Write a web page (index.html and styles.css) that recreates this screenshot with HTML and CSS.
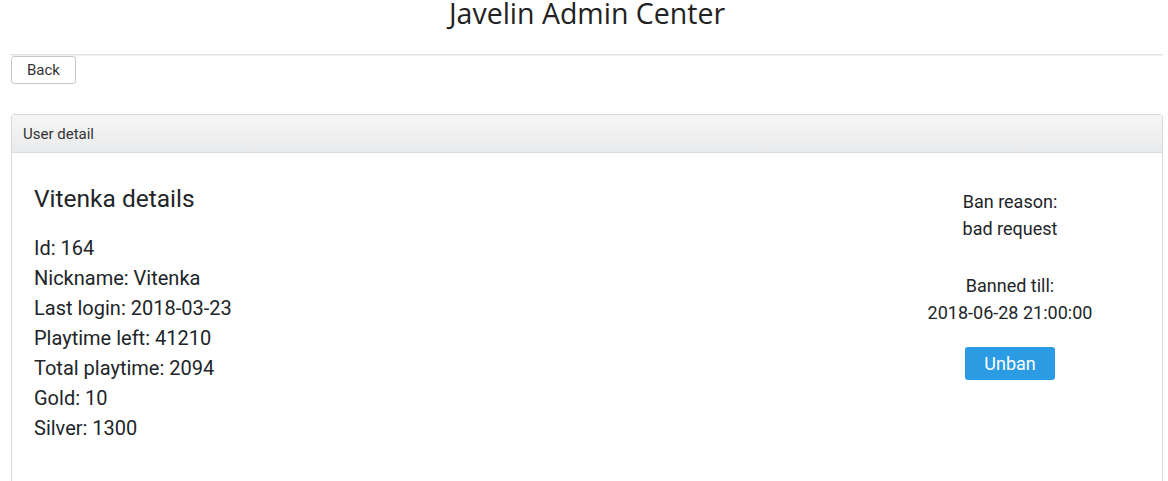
FILE: index.html
```html
<!DOCTYPE html>
<html>
<head>
<meta charset="utf-8">
<link rel="stylesheet" href="styles.css">
</head>
<body>
<div class="page">
  <h1 class="title">Javelin Admin Center</h1>
  <hr class="rule">
  <button class="btn-back">Back</button>
  <div class="card">
    <div class="card-header">User detail</div>
    <div class="card-body">
      <div class="details">
        <h2 class="details-title">Vitenka details</h2>
        <div class="line">Id: 164</div>
        <div class="line">Nickname: Vitenka</div>
        <div class="line">Last login: 2018-03-23</div>
        <div class="line">Playtime left: 41210</div>
        <div class="line">Total playtime: 2094</div>
        <div class="line">Gold: 10</div>
        <div class="line">Silver: 1300</div>
      </div>
      <div class="ban">
        <div class="ban-line">Ban reason:</div>
        <div class="ban-line">bad request</div>
        <div class="ban-gap"></div>
        <div class="ban-line">Banned till:</div>
        <div class="ban-line">2018-06-28 21:00:00</div>
        <button class="btn-unban">Unban</button>
      </div>
    </div>
  </div>
</div>
</body>
</html>
```
FILE: styles.css
```css
html, body {
  margin: 0;
  padding: 0;
  background: #fff;
}
body {
  font-family: Roboto, "Liberation Sans", sans-serif;
  color: #212529;
}
.page {
  margin: 0 5px 0 11px;
}
.title {
  margin: 0;
  text-align: center;
  font-family: "Open Sans", "Noto Sans", sans-serif;
  font-weight: 400;
  font-size: 28.5px;
  line-height: 26px;
  height: 43px;
  color: #222;
  overflow: visible;
}
.rule {
  margin: 11px 0 0 0;
  border: 0;
  border-top: 1px solid #e0e0e0;
  border-bottom: 1px solid #f0f0f0;
  height: 0;
}
.btn-back {
  display: block;
  margin-top: 0;
  width: 65px;
  height: 28px;
  padding: 0;
  background: #fff;
  border: 1px solid #c8c8c8;
  border-radius: 3px;
  font-family: Roboto, sans-serif;
  font-size: 15px;
  color: #333;
}
.card {
  margin-top: 30px;
  border: 1px solid #d9d9d9;
  border-radius: 3px;
  height: 420px;
}
.card-header {
  height: 38px;
  box-sizing: border-box;
  padding: 0 11px;
  display: flex;
  align-items: center;
  font-size: 15px;
  color: #333;
  background: linear-gradient(#f6f6f7, #e9eaeb);
  border-bottom: 1px solid #dcdcdc;
}
.card-body {
  display: flex;
  justify-content: space-between;
  padding: 29px 0 0 22px;
}
.details-title {
  margin: 0 0 17px 0;
  font-weight: 400;
  font-size: 24.5px;
  line-height: 34px;
}
.line {
  font-size: 20px;
  line-height: 30px;
}
.ban {
  width: 220px;
  margin-right: 42px;
  display: flex;
  flex-direction: column;
  align-items: center;
  padding-top: 6px;
  font-size: 18px;
}
.ban-line {
  line-height: 27px;
}
.ban-gap {
  height: 30px;
}
.btn-unban {
  margin-top: 21px;
  width: 90px;
  height: 33px;
  border: 0;
  border-radius: 3px;
  background: #2b9be3;
  color: #fff;
  font-family: Roboto, sans-serif;
  font-size: 18px;
  padding: 0;
}
```
